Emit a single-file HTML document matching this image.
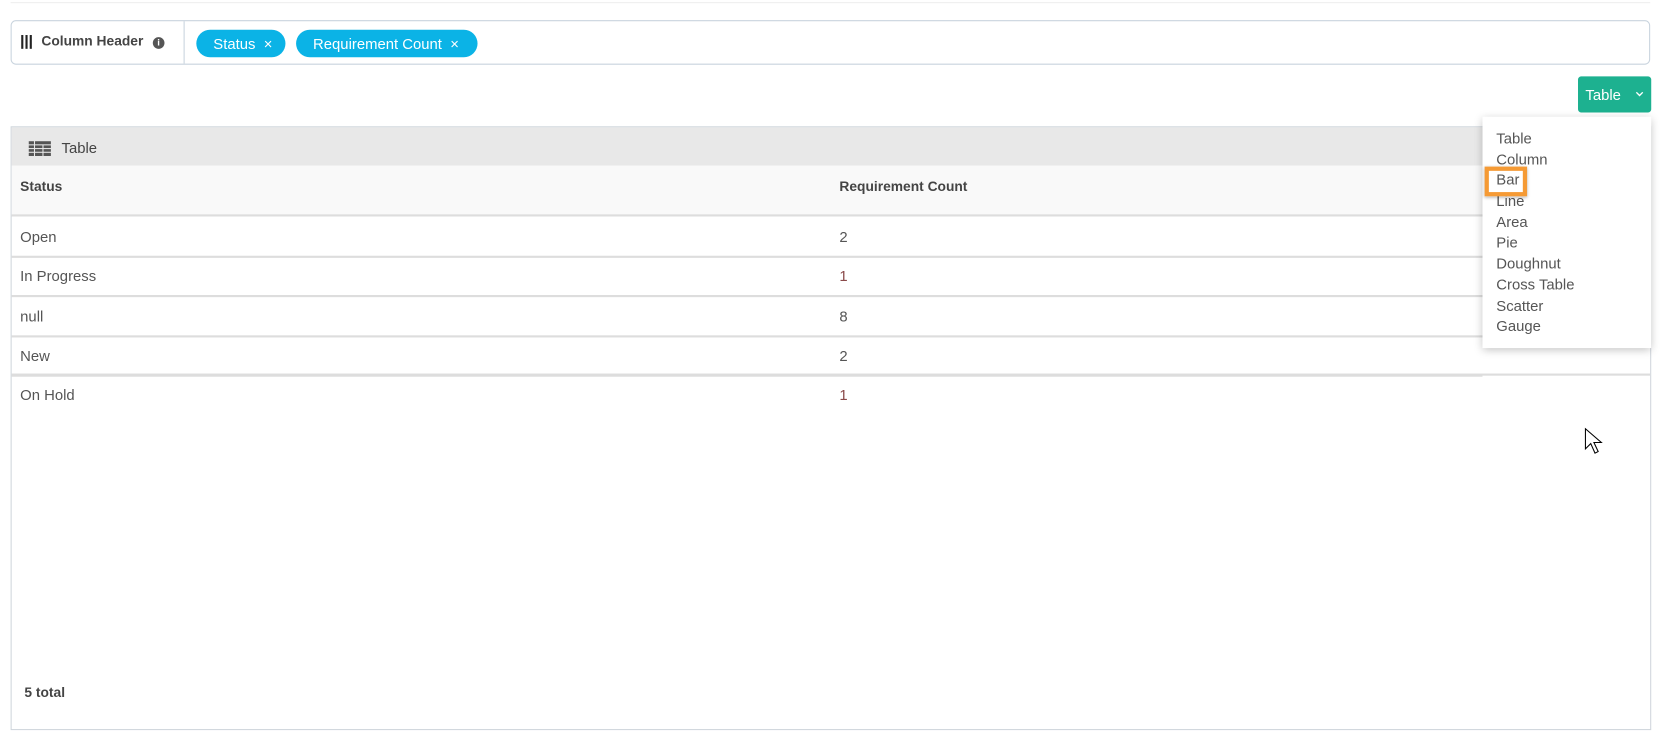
<!DOCTYPE html>
<html><head><style>
html,body{margin:0;width:1664px;height:743px;background:#fff;overflow:hidden}
#w{position:absolute;left:0;top:0;width:1568px;height:700px;transform:scale(1.0612);transform-origin:0 0;font-family:"Liberation Sans",sans-serif;color:#555}
.a{position:absolute}
.chip{position:absolute;top:28px;height:26px;border-radius:13px;background:#0bb3e6;color:#fff;font-size:14px;line-height:26px;padding-left:16px;box-sizing:border-box}
.row{position:absolute;left:11px;width:1386px;height:37px;border-bottom:2px solid #ddd;font-size:14px}
.row span{position:absolute;top:11px}
.dd div{height:19.7px;line-height:19.7px}
</style></head><body><div id="w">
<div class="a" style="left:10px;top:2px;width:1545px;height:1px;background:#eee"></div>
<div class="a" style="left:10px;top:19px;width:1545px;height:42px;border:1px solid #c9d4de;border-radius:5px;box-sizing:border-box"></div>
<div class="a" style="left:173px;top:20px;width:1px;height:40px;background:#c9d4de"></div>
<div class="a" style="left:20px;top:33px;width:2px;height:13px;background:#222;box-shadow:4px 0 #222,8px 0 #222"></div>
<div class="a" style="left:39px;top:31px;font-size:13px;font-weight:bold;color:#444">Column Header</div>
<div class="a" style="left:144px;top:35px;width:11px;height:11px;border-radius:50%;background:#555;color:#fff;font-size:9px;font-weight:bold;text-align:center;line-height:11px">i</div>
<div class="chip" style="left:185px;width:84px">Status <span style="margin-left:4px">×</span></div>
<div class="chip" style="left:279px;width:171px">Requirement Count <span style="margin-left:4px">×</span></div>
<div class="a" style="left:1487px;top:72px;width:69px;height:34px;background:#1db190;border-radius:3px;color:#fff;font-size:14px;line-height:34px"><span style="margin-left:7px">Table</span><svg style="position:absolute;left:54px;top:14px" width="8" height="6"><path d="M1 1 L4 4 L7 1" stroke="#fff" stroke-width="1.3" fill="none"/></svg></div>
<div class="a" style="left:10px;top:119px;width:1546px;height:569px;border:1px solid #d0d6dc;box-sizing:border-box"></div>
<div class="a" style="left:11px;top:120px;width:1544px;height:36px;background:#e8e8e8"></div>
<svg class="a" style="left:27px;top:133px" width="21" height="14"><g fill="#555"><rect x="0" y="0" width="5" height="3"/><rect x="6" y="0" width="15" height="3"/><rect x="0" y="4" width="5" height="2.5"/><rect x="6" y="4" width="7" height="2.5"/><rect x="14" y="4" width="7" height="2.5"/><rect x="0" y="7.5" width="5" height="2.5"/><rect x="6" y="7.5" width="7" height="2.5"/><rect x="14" y="7.5" width="7" height="2.5"/><rect x="0" y="11" width="5" height="3"/><rect x="6" y="11" width="7" height="3"/><rect x="14" y="11" width="7" height="3"/></g></svg>
<div class="a" style="left:58px;top:131px;font-size:14px;color:#444">Table</div>
<div class="a" style="left:11px;top:156px;width:1544px;height:46px;background:#f9f9f9;border-bottom:2px solid #ddd"></div>
<div class="a" style="left:19px;top:168px;font-size:13px;font-weight:bold;color:#444">Status</div>
<div class="a" style="left:791px;top:168px;font-size:13px;font-weight:bold;color:#444">Requirement Count</div>
<div class="row" style="top:204px"><span style="left:8px">Open</span><span style="left:780px">2</span></div>
<div class="row" style="top:241px"><span style="left:8px">In Progress</span><span style="left:780px;color:#8a4a4a">1</span></div>
<div class="row" style="top:279px"><span style="left:8px">null</span><span style="left:780px">8</span></div>
<div class="row" style="top:316px"><span style="left:8px">New</span><span style="left:780px">2</span></div>
<div class="a" style="left:1397px;top:241px;width:158px;height:2px;background:#ddd"></div>
<div class="a" style="left:1397px;top:278px;width:158px;height:2px;background:#ddd"></div>
<div class="a" style="left:11px;top:203px;width:1544px;height:1px;background:#ddd"></div>
<div class="a" style="left:11px;top:352px;width:1544px;height:2px;background:#ddd"></div>
<div class="a" style="left:19px;top:364px;font-size:14px">On Hold</div>
<div class="a" style="left:791px;top:364px;font-size:14px;color:#8a4a4a">1</div>
<div class="a" style="left:23px;top:645px;font-size:13px;font-weight:bold;color:#444">5 total</div>
<div class="a dd" style="left:1397px;top:110px;width:159px;height:218px;background:#fff;box-shadow:0 2px 8px rgba(0,0,0,.25);padding-top:11px;box-sizing:border-box;padding-left:13px;font-size:14px;color:#555">
<div>Table</div><div>Column</div><div>Bar</div><div>Line</div><div>Area</div><div>Pie</div><div>Doughnut</div><div>Cross Table</div><div>Scatter</div><div>Gauge</div></div>
<div class="a" style="left:1399px;top:157px;width:40px;height:28px;border:4px solid #f59a34;box-sizing:border-box;box-shadow:0 1px 3px rgba(0,0,0,.3)"></div>
<svg class="a" style="left:1493px;top:403px" width="18" height="26"><path d="M1 1 L1 20 L6 15 L10 24 L13 22.5 L9 14 L16 14 Z" fill="#fff" stroke="#000" stroke-width="1"/></svg>
</div></body></html>
